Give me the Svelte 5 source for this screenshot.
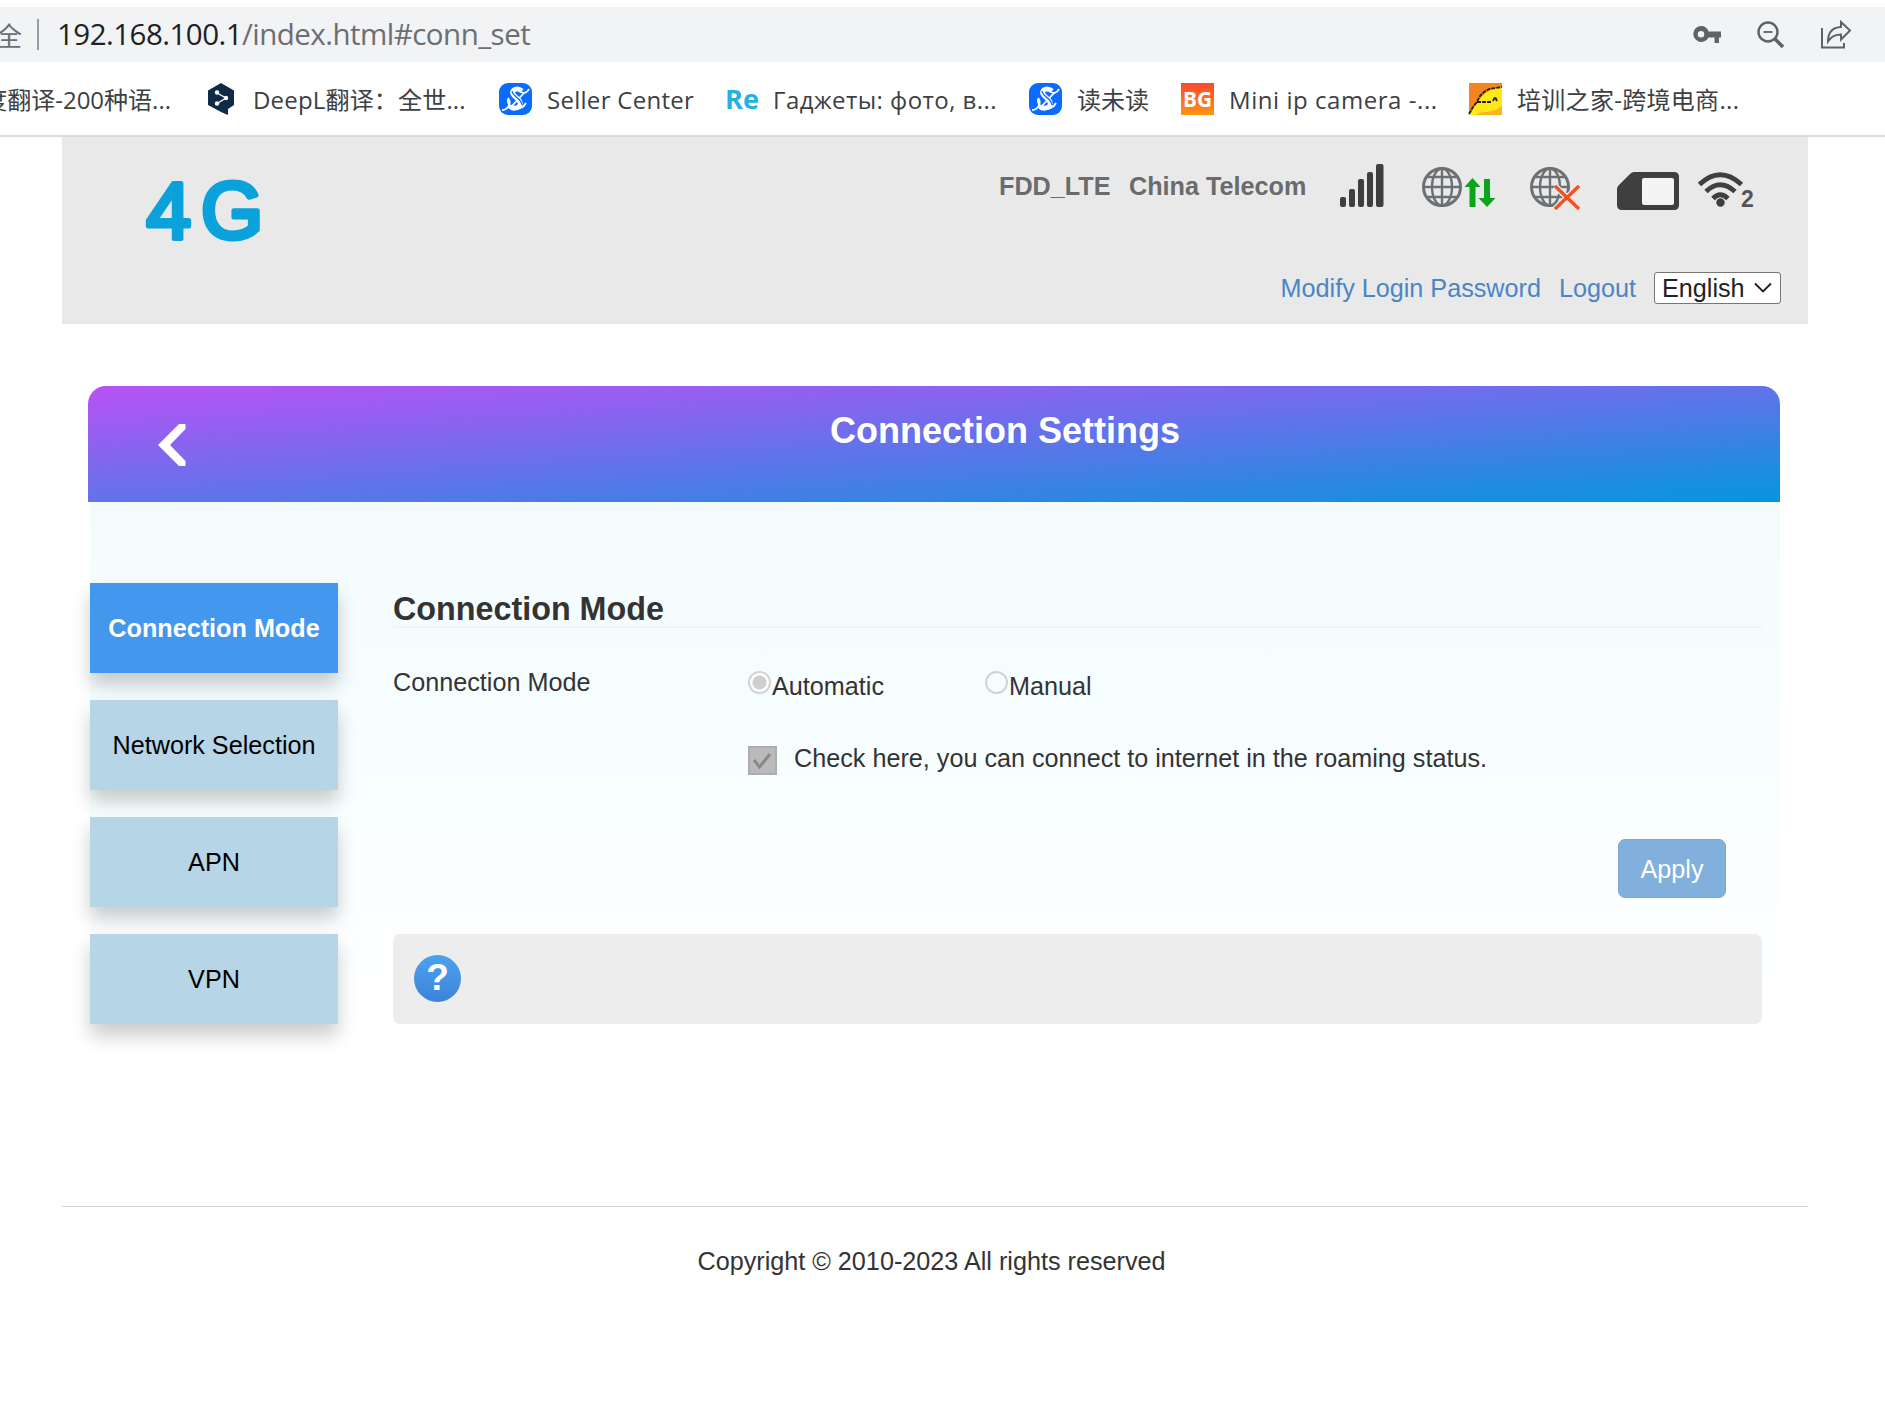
<script>
	let mode = $state('auto');
	let roaming = $state(true);
	let language = $state('English');
	let current = $state('Connection Mode');

	const menu = ['Connection Mode', 'Network Selection', 'APN', 'VPN'];

	// width: room taken by the label, spacing: letter spacing in px
	const bookmarks = [
		{ icon: 'deepl', text: 'DeepL翻译：全世...', width: 214, spacing: 0.18 },
		{ icon: 'seller', text: 'Seller Center', width: 146, spacing: 0.28 },
		{ icon: 're', text: 'Гаджеты: фото, в...', width: 224, spacing: 0.45 },
		{ icon: 'seller', text: '读未读', width: 72, spacing: 0 },
		{ icon: 'bg', text: 'Mini ip camera -...', width: 208, spacing: 0.55 },
		{ icon: 'train', text: '培训之家-跨境电商...', width: 224, spacing: 0.3 }
	];
</script>

{#snippet globe()}
	<g fill="none" stroke="#6d7073" stroke-width="2.4">
		<circle cx="20" cy="20" r="18.5" stroke-width="3" />
		<ellipse cx="20" cy="20" rx="10" ry="18.5" />
		<path d="M20 1.500V38.500M1.500 20H38.500M5 10H35M5 30H35" />
	</g>
{/snippet}

<div class="omnibox">
	<span class="secure">全</span>
	<span class="sep"></span>
	<span class="url"><b>192.168.100.1</b>/index.html#conn_set</span>
	<svg class="key" width="30" height="24" viewBox="0 0 30 24">
		<path fill="#5f6368" fill-rule="evenodd" d="M8 3a8 8 0 1 0 7.500 11.500H21.500v5.500h4.500v-5.500h2V8.500H15.500A8 8 0 0 0 8 3zM8 8a3 3 0 1 1 0 6.500A3 3 0 0 1 8 8z" />
	</svg>
	<svg class="lens" width="28" height="28" viewBox="0 0 28 28">
		<circle cx="11" cy="11" r="9.500" fill="none" stroke="#5f6368" stroke-width="2.4" />
		<path d="M6.500 11H15.500" stroke="#5f6368" stroke-width="1.800" />
		<path d="M17.500 17.500L26 26" stroke="#5f6368" stroke-width="3.600" />
	</svg>
	<svg class="share" width="32" height="30" viewBox="0 0 32 30">
		<path d="M2 8V27.500H24V23" fill="none" stroke="#5f6368" stroke-width="2" />
		<path d="M21 2L30 10.500L21 19.500V14.500C14 14.500 11 17 8 21.500C8 13 12 7.500 21 7Z" fill="none" stroke="#5f6368" stroke-width="2" />
	</svg>
</div>

<div class="bookmarks">
	<span class="cut"><span>度翻译-200种语...</span></span>
	{#each bookmarks as b}
		<div class="bookmark">
			<svg width={b.icon == 'deepl' ? 30 : 33} height="33">
				{#if b.icon == 'deepl'}
					<path d="M13 0L26 7.500V22L20 26V32L13 29L0 22V7.500Z" fill="#0f2b46" />
					<path d="M9 10L18 15L9 20.500" fill="none" stroke="#fff" stroke-width="1.400" />
					<circle cx="9" cy="9.500" r="2.200" fill="#fff" />
					<circle cx="18" cy="15" r="2.200" fill="#fff" />
					<circle cx="9" cy="20.500" r="2.200" fill="#fff" />
				{:else if b.icon == 'seller'}
					<rect width="33" height="32" rx="9" fill="#0a6cff" />
					<path d="M23 8C18 4 12 7 14 11C16 15 23 17 21 22C19 26 13 26 11 23" fill="none" stroke="#fff" stroke-width="5" />
					<path d="M3 27C9 27 13 20 9 15M30 6C28 10 24 12 20 7M9 16C7 25 22 30 27 20M11 25L25 10" fill="none" stroke="#fff" stroke-width="1.800" />
					<path d="M13 8C14 15 22 14 23 22" fill="none" stroke="#0a6cff" stroke-width="1.300" />
				{:else if b.icon == 're'}
					<text x="0" y="26" class="re" textLength="34" lengthAdjust="spacingAndGlyphs">Re</text>
				{:else if b.icon == 'bg'}
					<defs>
						<linearGradient id="bg" x2="0" y2="1">
							<stop offset="0" stop-color="#f9492f" />
							<stop offset="1" stop-color="#ff9410" />
						</linearGradient>
					</defs>
					<rect width="33" height="32" fill="url(#bg)" />
					<text x="2" y="24" class="bg" textLength="29" lengthAdjust="spacingAndGlyphs">BG</text>
				{:else}
					<rect width="33" height="32" fill="#ffe816" />
					<path d="M0 0H33V4C17 5 9 16 2 30H0Z" fill="#f5831f" />
					<path d="M7 32C14 27 24 31 33 23V32Z" fill="#fbb41a" />
					<path d="M0 31L4 24L8 19L11 13L15 9L20 6L33 4M8 19H22M24 18L26 14L28 18" fill="none" stroke="#222" stroke-width="1.800" stroke-dasharray="4 1" />
				{/if}
			</svg>
			<span class="label" style="width: {b.width}px; letter-spacing: {b.spacing}px">{b.text}</span>
		</div>
	{/each}
</div>

<div class="page">
	<header>
		<svg class="logo" width="130" height="80" viewBox="0 0 130 80">
			<text x="5.500" y="67.500">4</text>
			<text x="60" y="67.500">G</text>
		</svg>
		<div class="right">
			<div class="status">
				<b class="net">FDD_LTE</b>
				<b class="operator">China Telecom</b>
				<svg class="signal" width="44" height="44" viewBox="0 0 44 44" fill="#3f3f3f">
					<rect x="0" y="33" width="6" height="10" rx="2" />
					<rect x="9" y="25" width="6" height="18" rx="2" />
					<rect x="18" y="15" width="6" height="28" rx="2" />
					<rect x="27" y="8" width="6" height="35" rx="2" />
					<rect x="36" y="0" width="7.500" height="43" rx="2" />
				</svg>
				<svg class="wan" width="74" height="42" viewBox="0 0 74 42">
					{@render globe()}
					<path d="M50.500 11L58.500 20H53.500V40H47.500V20H42.500ZM62 12H68V31H73.500L65 40L56.500 31H62Z" fill="#0ba51c" />
				</svg>
				<svg class="lan" width="52" height="43" viewBox="0 0 52 43">
					{@render globe()}
					<path d="M25 19L49 42M49 19L25 42" stroke="#e9e9e9" stroke-width="6" />
					<path d="M25 19L49 42M49 19L25 42" stroke="#f4511e" stroke-width="3.400" />
				</svg>
				<svg class="sim" width="64" height="39" viewBox="0 0 64 39">
					<path d="M18 0H58Q63 0 63 5V33Q63 38 58 38H6Q1 38 1 33V17Q1 15 2.500 13.500L14 2Q16 0 18 0Z" fill="#3f3f3f" />
					<rect x="26" y="6" width="32" height="27" rx="2" fill="#f4f4f4" />
				</svg>
				<svg class="wifi" width="58" height="40" viewBox="0 0 58 40">
					<g fill="none" stroke="#3f3f3f" stroke-width="4.800">
						<path d="M1.500 12.500Q22 -7 43.500 12.500" />
						<path d="M8 19.500Q22 6 37 19.500" />
						<path d="M15 26.500Q22 19 30 26.500" />
					</g>
					<circle cx="22.500" cy="30.500" r="4.200" fill="#3f3f3f" />
					<text x="43" y="34.500">2</text>
				</svg>
			</div>
			<div class="links">
				<a href="#password">Modify Login Password</a>
				<a href="#logout">Logout</a>
				<button class="lang">
					{language}
					<svg width="18" height="12" viewBox="0 0 18 12">
						<path d="M1 1.500L9 9.500L17 1.500" fill="none" stroke="#222" stroke-width="1.900" />
					</svg>
				</button>
			</div>
		</div>
	</header>

	<div class="panel">
		<div class="title">
			<svg width="30" height="44" viewBox="0 0 30 44">
				<path d="M22 1H28.500V6L13 22L28.500 38V43H22L1 22Z" fill="#fff" />
			</svg>
			<h1>Connection Settings</h1>
		</div>
		<div class="body">
			<nav>
				{#each menu as item}
					<button class:active={item == current} onclick={() => (current = item)}>{item}</button>
				{/each}
			</nav>
			<main>
				<h2>Connection Mode</h2>
				<div class="row">
					<span class="name">Connection Mode</span>
					<label class="auto">
						<span class="radio" class:on={mode == 'auto'}></span>Automatic
					</label>
					<label>
						<span class="radio" class:on={mode == 'manual'}></span>Manual
					</label>
				</div>
				<div class="roaming">
					<svg width="29" height="29" viewBox="0 0 29 29">
						<rect x="1" y="1" width="27" height="27" fill="#bababa" stroke="#adadad" stroke-width="2" />
						{#if roaming}
							<path d="M6 14L11.500 21L22 8" fill="none" stroke="#888" stroke-width="3" />
						{/if}
					</svg>
					<span>Check here, you can connect to internet in the roaming status.</span>
				</div>
				<button class="apply">Apply</button>
				<div class="help">
					<span class="question">?</span>
				</div>
			</main>
		</div>
	</div>

	<footer>Copyright © 2010-2023 All rights reserved</footer>
</div>

<style>
	:global(body) {
		background: #fff;
		overflow: hidden;
	}

	.omnibox, .bookmarks {
		display: flex;
		align-items: center;
		font-family: "Open Sans", "Noto Sans CJK SC", sans-serif;
		white-space: nowrap;
	}
	.omnibox {
		height: 55px;
		margin-top: 7px;
		background: #f1f3f4;
		color: #6b6e72;
	}
	.secure {
		width: 37px;
		font-size: 26px;
		text-indent: -4px;
	}
	.sep {
		width: 2px;
		height: 31px;
		background: #9a9da1;
	}
	.url {
		margin-left: 18px;
		margin-top: -1px;
		flex: 1;
		font-size: 29.5px;
		line-height: 50px;
		letter-spacing: -0.53px;
	}
	.url b {
		font-weight: normal;
		color: #202124;
	}
	.key {
		margin-right: 34px;
	}
	.lens {
		margin-right: 35px;
	}
	.share {
		margin-right: 33px;
	}

	.bookmarks {
		height: 73px;
		border-bottom: 2px solid #d9dadb;
		color: #3c4043;
		font-size: 24px;
		line-height: 36px;
	}
	.cut {
		width: 171px;
		margin-right: 37px;
		padding-top: 2px;
		display: flex;
		justify-content: flex-end;
	}
	.bookmark {
		display: flex;
		align-items: center;
		margin-right: 32px;
	}
	.bookmark svg {
		margin-right: 15px;
		margin-top: 1px;
		overflow: visible;
	}
	.label {
		padding-top: 2px;
	}
	.re {
		font: bold 27px "Open Sans", sans-serif;
		fill: #22b1e0;
	}
	.bg {
		font: bold 22px "Open Sans", sans-serif;
		fill: #fff;
	}

	.page {
		width: 1746px;
		margin-left: 62px;
		font-family: "Liberation Sans", Arial, sans-serif;
		font-size: 25.2px;
		color: #333;
	}
	header {
		height: 187px;
		display: flex;
		justify-content: space-between;
		background: #e9e9e9;
	}
	.logo {
		margin: 33px 0 0 79px;
		overflow: visible;
	}
	.logo text {
		font: 80px "Liberation Sans", sans-serif;
		fill: #0ba1db;
		stroke: #0ba1db;
		stroke-width: 5;
		stroke-linejoin: round;
	}
	.right {
		display: flex;
		flex-direction: column;
	}
	.status {
		display: flex;
		align-items: flex-start;
		height: 110px;
		padding-top: 27px;
		margin-right: 52px;
		box-sizing: border-box;
		color: #6a6b6c;
		white-space: nowrap;
	}
	.status b {
		line-height: 44px;
	}
	.net {
		width: 130px;
	}
	.operator {
		width: 211px;
	}
	.wan {
		margin: 3px 0 0 38px;
	}
	.lan {
		margin: 3px 0 0 34px;
	}
	.sim {
		margin: 8px 0 0 34px;
	}
	.wifi {
		margin: 8px 0 0 18px;
	}
	.wifi text {
		font: bold 23px "Liberation Sans", sans-serif;
		fill: #555;
	}
	.links {
		display: flex;
		justify-content: flex-end;
		align-items: flex-start;
		gap: 18px;
		padding: 25px 27px 0 0;
		line-height: 32px;
	}
	.links a {
		color: #4a86c5;
		text-decoration: none;
	}
	.lang {
		width: 127px;
		height: 32px;
		padding: 0 8px 0 7px;
		display: flex;
		align-items: center;
		justify-content: space-between;
		background: #fff;
		border: 1px solid #767676;
		border-radius: 3px;
		font: inherit;
		color: #222;
	}

	.panel {
		width: 1692px;
		margin: 62px 0 0 26px;
	}
	.title {
		height: 116px;
		display: flex;
		border-radius: 18px 18px 0 0;
		background: linear-gradient(to bottom right, #b852f6, 52%, #0496dd);
	}
	.title svg {
		margin: 37px 0 0 69px;
	}
	h1 {
		margin: 24px 0 0 643px;
		font-size: 36px;
		line-height: 42px;
		color: #fff;
	}
	.body {
		display: flex;
		height: 523px;
		margin-left: 2px;
		background: linear-gradient(#f3fbfd, #f8feff 50%, #fff);
	}
	nav {
		display: flex;
		flex-direction: column;
		gap: 27px;
		width: 248px;
		padding-top: 81px;
	}
	nav button {
		height: 90px;
		border: none;
		background: #b6d5e7;
		box-shadow: 0 12px 18px rgba(0, 0, 0, 0.2);
		font: inherit;
		color: #000;
		white-space: nowrap;
	}
	nav button.active {
		background: #4397ed;
		color: #fff;
		font-weight: bold;
	}
	main {
		width: 1369px;
		margin-left: 55px;
		padding-top: 87px;
		display: flex;
		flex-direction: column;
	}
	h2 {
		margin: 0;
		height: 37px;
		border-bottom: 2px solid #f0f4f6;
		font-size: 32.3px;
		line-height: 40px;
	}
	.row {
		display: flex;
		height: 60px;
		margin-top: 37px;
	}
	.row .name {
		width: 355px;
		line-height: 34px;
	}
	.row label {
		display: flex;
		line-height: 42px;
	}
	.row .auto {
		width: 237px;
	}
	.radio {
		box-sizing: border-box;
		width: 23px;
		height: 23px;
		margin: 6px 1px 0 0;
		border: 2px solid #d2d4d4;
		border-radius: 50%;
	}
	.radio.on {
		background: radial-gradient(circle, #cdcfcf 6.500px, #fff 7.500px);
	}
	.roaming {
		display: flex;
		margin: 21px 0 0 355px;
		line-height: 25px;
	}
	.roaming svg {
		margin-right: 17px;
	}
	.apply {
		align-self: flex-end;
		width: 108px;
		height: 59px;
		margin: 64px 36px 36px 0;
		padding-top: 3px;
		border: 1px solid #7fa9d0;
		border-radius: 7px;
		background: #82b0dc;
		font: inherit;
		color: #fff;
	}
	.help {
		height: 90px;
		display: flex;
		align-items: center;
		border-radius: 7px;
		background: #ededed;
	}
	.question {
		width: 47px;
		height: 47px;
		margin: -2px 0 0 21px;
		border-radius: 50%;
		background: linear-gradient(#4ba3ee, #3f83d6);
		color: #fff;
		font-size: 37px;
		font-weight: bold;
		line-height: 46px;
		text-align: center;
	}
	footer {
		margin-top: 181px;
		padding: 36px 7px 0 0;
		border-top: 1px solid #d6d6d6;
		line-height: 36px;
		text-align: center;
	}
</style>
